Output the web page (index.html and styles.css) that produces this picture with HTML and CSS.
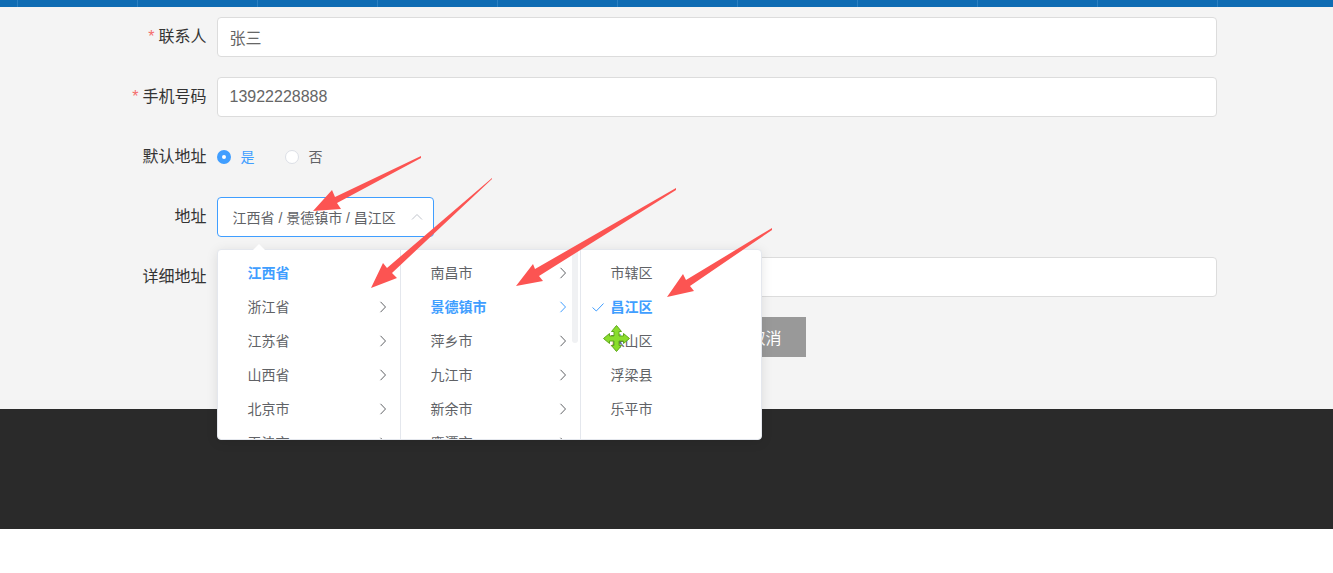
FILE: index.html
```html
<!DOCTYPE html>
<html lang="zh-CN">

<head>
    <meta charset="UTF-8">
    <meta name="viewport" content="width=device-width, initial-scale=1.0">
    <title>收货地址</title>
    <link rel="stylesheet" href="styles.css">
</head>

<body>
    <svg class="symbols" aria-hidden="true">
        <symbol id="arrow-right" viewBox="0 0 14 14">
            <path d="M4.5 1.8 L9.5 7 L4.5 12.2" />
        </symbol>
    </svg>

    <nav class="nav">
        <div class="nav-list">
            <span></span><span></span><span></span><span></span><span></span>
            <span></span><span></span><span></span><span></span><span></span>
        </div>
    </nav>

    <main class="main">
        <form class="form">
            <div class="form-item required">
                <label class="form-label" for="name">联系人</label>
                <input class="input" id="name" type="text" value="张三">
            </div>
            <div class="form-item required">
                <label class="form-label" for="phone">手机号码</label>
                <input class="input" id="phone" type="text" value="13922228888">
            </div>
            <div class="form-item">
                <span class="form-label" id="default-label">默认地址</span>
                <div class="radio-group" role="radiogroup" aria-labelledby="default-label">
                    <label class="radio"><input type="radio" name="isDefault" checked><span>是</span></label>
                    <label class="radio"><input type="radio" name="isDefault"><span>否</span></label>
                </div>
            </div>
            <div class="form-item">
                <label class="form-label" for="area">地址</label>
                <div class="cascader">
                    <input class="cascader-input" id="area" type="text" value="江西省 / 景德镇市 / 昌江区" readonly>
                    <svg class="cascader-caret" viewBox="0 0 14 14"><path d="M2 9.5 L7 4.5 L12 9.5" /></svg>
                    <div class="dropdown">
                        <ul class="menu">
                            <li class="active"><span>江西省</span></li>
                            <li><span>浙江省</span><svg><use href="#arrow-right" /></svg></li>
                            <li><span>江苏省</span><svg><use href="#arrow-right" /></svg></li>
                            <li><span>山西省</span><svg><use href="#arrow-right" /></svg></li>
                            <li><span>北京市</span><svg><use href="#arrow-right" /></svg></li>
                            <li><span>天津市</span><svg><use href="#arrow-right" /></svg></li>
                        </ul>
                        <ul class="menu scrolling">
                            <li><span>南昌市</span><svg><use href="#arrow-right" /></svg></li>
                            <li class="active"><span>景德镇市</span><svg><use href="#arrow-right" /></svg></li>
                            <li><span>萍乡市</span><svg><use href="#arrow-right" /></svg></li>
                            <li><span>九江市</span><svg><use href="#arrow-right" /></svg></li>
                            <li><span>新余市</span><svg><use href="#arrow-right" /></svg></li>
                            <li><span>鹰潭市</span><svg><use href="#arrow-right" /></svg></li>
                        </ul>
                        <ul class="menu">
                            <li><span>市辖区</span></li>
                            <li class="active">
                                <svg class="check" viewBox="0 0 14 14"><path d="M1.5 7.5 L5.3 11 L12.5 3.5" /></svg>
                                <span>昌江区</span>
                            </li>
                            <li><span>珠山区</span></li>
                            <li><span>浮梁县</span></li>
                            <li><span>乐平市</span></li>
                        </ul>
                    </div>
                </div>
            </div>
            <div class="form-item">
                <label class="form-label" for="detail">详细地址</label>
                <input class="input" id="detail" type="text">
            </div>
            <div class="form-actions">
                <button class="btn btn-primary" type="submit">保存</button>
                <button class="btn" type="button">取消</button>
            </div>

            <svg class="marks" viewBox="117 7 1100 402" aria-hidden="true">
                <g fill="#fc5452">
                    <path d="M421 156 L335 197 L332 190 L313 211 L341 209 L337 203 L421 158 Z" />
                    <path d="M492 178 L387 268 L383 263 L371 288 L397 278 L392 273 L492 179 Z" />
                    <path d="M676 188 L535 269 L533 264 L516 286 L543 281 L539 276 L676 190 Z" />
                    <path d="M772 228 L686 280 L683 274 L667 297 L694 291 L690 286 L772 230 Z" />
                </g>
                <path fill="#8add2c" stroke="#5fa81c" stroke-linejoin="round"
                    d="M616.5 325.5 L621.5 331.5 H619 V336 H623.5 V333.5 L629.5 338.5 L623.5 343.5 V341 H619 V345.5 H621.5 L616.5 351.5 L611.5 345.5 H614 V341 H609.5 V343.5 L603.5 338.5 L609.5 333.5 V336 H614 V331.5 H611.5 Z" />
            </svg>
        </form>
    </main>

    <footer class="footer"></footer>
</body>

</html>
```
FILE: styles.css
```css
* {
    box-sizing: border-box;
}

body {
    margin: 0;
    background-color: #fff;
    color: #333;
    font-family: "Liberation Sans", "Noto Sans CJK SC", sans-serif;
    font-size: 14px;
}

.symbols {
    position: absolute;
    width: 0;
    height: 0;
}

.nav {
    height: 7px;
    background-color: #0f6cb3;
}

.nav-list {
    display: flex;
    max-width: 1300px;
    height: 100%;
    margin: 0 auto;
    border-left: 1px solid #2a7fc0;
}

.nav-list span {
    width: 120px;
    border-right: 1px solid #2a7fc0;
}

.main {
    padding-bottom: 52px;
    background-color: #f4f4f4;
}

.form {
    position: relative;
    max-width: 1100px;
    margin: 0 auto;
    padding-top: 10px;
}

.form-item {
    display: flex;
    margin-bottom: 20px;
}

.form-label {
    flex: none;
    width: 100px;
    padding-right: 10px;
    font-size: 16px;
    line-height: 40px;
    text-align: right;
}

.required .form-label::before {
    content: "*";
    margin-right: 4px;
    color: #f56c6c;
}

.input {
    flex: 1;
    min-width: 0;
    height: 40px;
    padding: 0 12px;
    border: 1px solid #dcdcdc;
    border-radius: 4px;
    background-color: #fff;
    color: #666;
    font-family: inherit;
    font-size: 16px;
}

.radio-group {
    display: flex;
    align-items: center;
    gap: 30px;
}

.radio {
    display: flex;
    align-items: center;
    gap: 10px;
    color: #606266;
    line-height: 40px;
}

.radio input {
    appearance: none;
    width: 14px;
    height: 14px;
    margin: 0;
    border: 1px solid #dcdfe6;
    border-radius: 50%;
    background-color: #fff;
}

.radio input:checked {
    border: 5px solid #409eff;
}

.radio input:checked + span {
    color: #409eff;
}

.cascader {
    position: relative;
    width: 217px;
    height: 40px;
}

.cascader-input {
    width: 100%;
    height: 40px;
    padding: 0 30px 0 15px;
    border: 1px solid #409eff;
    border-radius: 4px;
    background-color: #fff;
    color: #606266;
    font-family: inherit;
    font-size: 14px;
}

.cascader-caret {
    position: absolute;
    top: 13px;
    right: 10px;
    width: 14px;
    height: 14px;
    fill: none;
    stroke: #c0c4cc;
}

.dropdown {
    position: absolute;
    top: 52px;
    left: 0;
    z-index: 1;
    display: flex;
    height: 191px;
    border: 1px solid #e4e7ed;
    border-radius: 4px;
    background-color: #fff;
    box-shadow: 0 2px 12px rgba(0, 0, 0, 0.1);
}

.dropdown::before {
    content: "";
    position: absolute;
    top: -6px;
    left: 35px;
    border: 6px solid transparent;
    border-top: 0;
    border-bottom-color: #fff;
}

.menu {
    position: relative;
    width: 180px;
    margin: 0;
    padding: 6px 0;
    overflow: hidden;
    border-right: 1px solid #e4e7ed;
    color: #606266;
    line-height: 34px;
    list-style: none;
}

.menu:first-child {
    width: 183px;
}

.menu:last-child {
    border-right: 0;
}

.menu li {
    position: relative;
    display: flex;
    align-items: center;
    justify-content: space-between;
    height: 34px;
    padding: 0 10px 0 30px;
}

.menu svg {
    width: 14px;
    height: 14px;
    fill: none;
    stroke: currentColor;
}

.menu .check {
    position: absolute;
    left: 10px;
}

.menu .active {
    color: #409eff;
    font-weight: bold;
}

.scrolling::after {
    content: "";
    position: absolute;
    top: 0;
    right: 2px;
    width: 6px;
    height: 93px;
    border-radius: 0 0 4px 4px;
    background-color: #f0f1f3;
}

.form-actions {
    display: flex;
    justify-content: center;
    gap: 18px;
    padding-left: 100px;
}

.btn {
    width: 80px;
    height: 40px;
    padding: 0;
    border: 0;
    background-color: #999;
    color: #fff;
    font-family: inherit;
    font-size: 16px;
}

.btn-primary {
    background-color: #0f6cb3;
}

.marks {
    position: absolute;
    top: 0;
    left: 0;
    z-index: 2;
    width: 1100px;
    height: 402px;
    pointer-events: none;
}

.footer {
    height: 120px;
    background-color: #2a2a2a;
}
```
